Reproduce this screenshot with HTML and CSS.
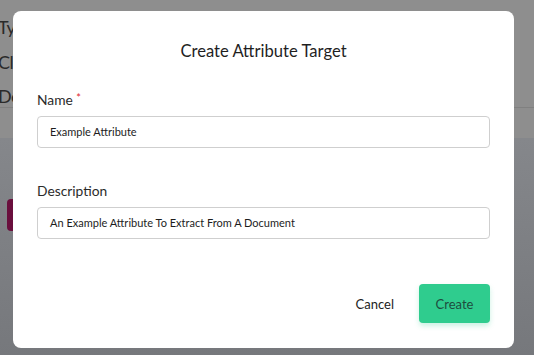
FILE: index.html
```html
<!DOCTYPE html>
<html>
<head>
<meta charset="utf-8">
<link rel="stylesheet" href="styles.css">
</head>
<body>
<div class="page">
  <div class="details">
    <div class="row">Type</div>
    <div class="row">Class</div>
    <div class="row">Desc</div>
  </div>
  <div class="band"></div>
  <div class="lower">
    <div class="purple-btn"></div>
  </div>
</div>
<div class="modal">
  <h2 class="title">Create Attribute Target</h2>
  <div class="field">
    <label class="label">Name <span class="req">*</span></label>
    <div class="input">Example Attribute</div>
  </div>
  <div class="field field-2">
    <label class="label">Description</label>
    <div class="input">An Example Attribute To Extract From A Document</div>
  </div>
  <div class="actions">
    <button class="btn-cancel">Cancel</button>
    <button class="btn-create">Create</button>
  </div>
</div>
</body>
</html>
```
FILE: styles.css
```css
* { box-sizing: border-box; }
html, body { margin: 0; padding: 0; }
body {
  width: 534px;
  height: 355px;
  overflow: hidden;
  font-family: "Lato", "Noto Sans", sans-serif;
  background: #7c7e82;
}
.page {
  height: 355px;
  display: flex;
  flex-direction: column;
}
.details {
  height: 108px;
  background: #8e8e8e;
  border-bottom: 1px solid #808080;
  padding-top: 16px;
  color: #2a2a2a;
  font-size: 18px;
}
.row {
  height: 34.5px;
  margin-left: -2px;
  letter-spacing: -0.5px;
}
.band {
  height: 30px;
  background: #8e8e8e;
}
.lower {
  flex: 1;
  background: linear-gradient(180deg, #85878b 0%, #76787c 100%);
  padding-top: 61px;
}
.purple-btn {
  margin-left: 7px;
  width: 60px;
  height: 32px;
  border-radius: 4px;
  background: #6a0f3d;
}
.modal {
  position: fixed;
  left: 13px;
  top: 11px;
  width: 501px;
  height: 337px;
  background: #ffffff;
  border-radius: 8px;
  padding: 26px 24px 25px 24px;
  display: flex;
  flex-direction: column;
}
.title {
  margin: 0;
  text-align: center;
  font-weight: 400;
  font-size: 16.6px;
  line-height: 28px;
  color: #1f1f1f;
}
.field {
  margin-top: 23px;
  display: flex;
  flex-direction: column;
}
.field-2 { margin-top: 33px; }
.label {
  font-size: 13.8px;
  line-height: 20px;
  color: #2b2b2b;
  margin-bottom: 6px;
}
.req {
  color: #e0282e;
  font-size: 11px;
  vertical-align: 3px;
}
.input {
  height: 32px;
  border: 1px solid #cfcfcf;
  border-radius: 4px;
  padding: 0 12px;
  font-size: 11px;
  line-height: 30px;
  color: #1d1d1d;
}
.actions {
  margin-top: auto;
  display: flex;
  justify-content: flex-end;
  align-items: center;
  gap: 25px;
}
.btn-cancel {
  border: none;
  background: transparent;
  font-family: inherit;
  font-size: 13px;
  color: #222;
  padding: 0;
}
.btn-create {
  width: 71px;
  height: 39px;
  border: none;
  border-radius: 4px;
  background: #2fcc8e;
  color: #1e4d3e;
  font-family: inherit;
  font-size: 13px;
  box-shadow: 0 3px 5px rgba(47, 204, 142, 0.25);
}
```
